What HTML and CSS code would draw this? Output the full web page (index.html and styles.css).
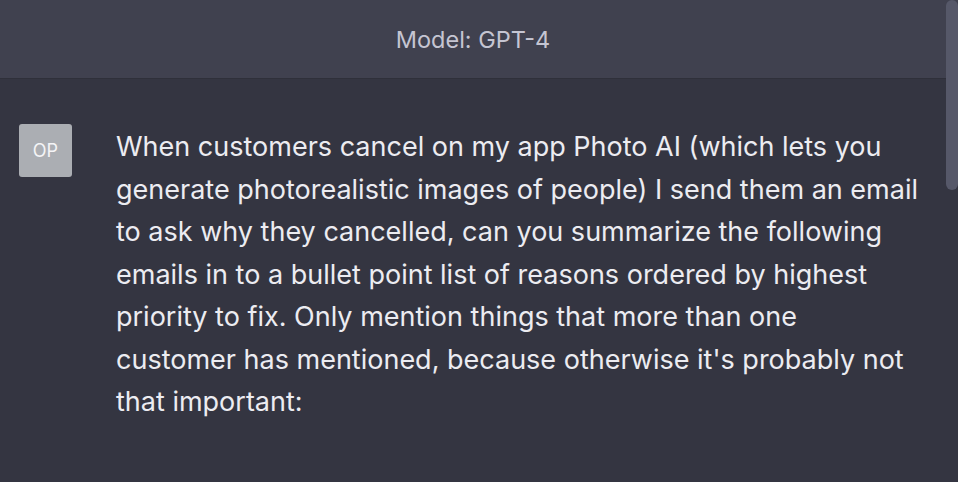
FILE: index.html
```html
<!DOCTYPE html>
<html>
<head>
<meta charset="utf-8">
<link rel="stylesheet" href="styles.css">
</head>
<body>
<div class="page">
  <header class="topbar">Model: GPT-4</header>
  <main class="thread">
    <div class="message">
      <div class="avatar">OP</div>
      <div class="text">When customers cancel on my app Photo AI (which lets you<br>generate photorealistic images of people) I send them an email<br>to ask why they cancelled, can you summarize the following<br>emails in to a bullet point list of reasons ordered by highest<br>priority to fix. Only mention things that more than one<br>customer has mentioned, because otherwise it's probably not<br>that important:</div>
    </div>
  </main>
  <div class="scrollbar"></div>
</div>
</body>
</html>
```
FILE: styles.css
```css
html, body {
  margin: 0;
  padding: 0;
  background: #343541;
  width: 958px;
  height: 482px;
  overflow: hidden;
}
.page {
  position: relative;
  width: 958px;
  height: 482px;
  font-family: Inter, "Noto Sans", sans-serif;
}
.topbar {
  height: 78px;
  background: #40414f;
  border-bottom: 1px solid #2f303a;
  display: flex;
  align-items: center;
  justify-content: center;
  color: #c5c5d2;
  font-size: 23.5px;
  padding-right: 12px;
}
.thread {
  padding-top: 45px;
}
.message {
  display: flex;
  align-items: flex-start;
  padding-left: 19px;
  gap: 44px;
}
.avatar {
  width: 53px;
  height: 53px;
  flex: none;
  background: #abaeb3;
  border-radius: 3px;
  display: flex;
  align-items: center;
  justify-content: center;
  color: #f4f4f6;
  font-size: 18px;
}
.text {
  color: #ececf1;
  font-size: 27px;
  line-height: 42.5px;
  white-space: nowrap;
  margin-top: 2px;
}
.scrollbar {
  position: absolute;
  top: 0;
  right: 0;
  width: 12px;
  height: 190px;
  background: #565869;
  border-radius: 6px;
}
```
